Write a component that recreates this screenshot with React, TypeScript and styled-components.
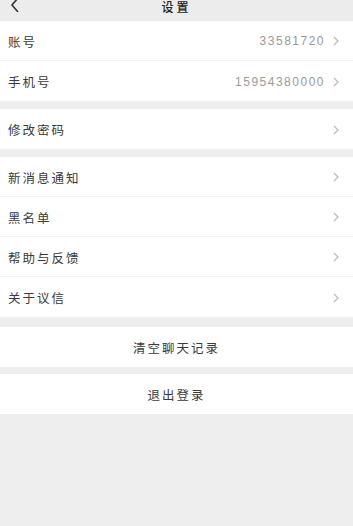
import React from "react";
import styled, { createGlobalStyle } from "styled-components";

const Global = createGlobalStyle`
  html, body {
    margin: 0;
    padding: 0;
    background: #eeeeee;
    font-family: "Noto Sans CJK SC", "Noto Sans", sans-serif;
  }
  * { box-sizing: border-box; }
`;

const Page = styled.div`
  width: 353px;
  min-height: 526px;
  background: #eeeeee;
  display: flex;
  flex-direction: column;
`;

const Header = styled.div`
  height: 21px;
  display: flex;
  align-items: flex-start;
  justify-content: center;
  position: relative;
  background: #ececec;
`;

const Back = styled.div`
  position: absolute;
  left: 10px;
  top: 0;
  width: 10px;
  height: 12px;
  display: flex;
`;

const Title = styled.div`
  font-size: 12px;
  line-height: 13px;
  padding-top: 0;
  color: #222;
  letter-spacing: 3px;
  font-weight: 500;
`;

const Group = styled.div<{ $gap: number }>`
  display: flex;
  flex-direction: column;
  background: #fff;
  margin-top: ${(p) => p.$gap}px;
`;

const Row = styled.div`
  height: 40px;
  display: flex;
  align-items: center;
  padding: 1px 14px 0 8px;
  border-bottom: 1px solid #f2f2f2;
  &:last-child { border-bottom: none; }
`;

const Label = styled.span`
  font-size: 12.5px;
  letter-spacing: 2px;
  color: #3a3a3a;
  flex: 1;
`;

const Value = styled.span`
  font-family: "Liberation Sans", Arial, sans-serif;
  font-size: 12px;
  letter-spacing: 1.5px;
  color: #9a9a9a;
  margin-right: 8px;
`;

const Center = styled.div`
  height: 40px;
  display: flex;
  align-items: center;
  justify-content: center;
  font-size: 12.5px;
  letter-spacing: 2px;
  color: #3a3a3a;
`;

const Chevron = () => (
  <svg width="6" height="10" viewBox="0 0 6 10">
    <path d="M1 1 L5 5 L1 9" fill="none" stroke="#b8b8b8" strokeWidth="1.2" />
  </svg>
);

const Item = ({ label, value }: { label: string; value?: string }) => (
  <Row>
    <Label>{label}</Label>
    {value && <Value>{value}</Value>}
    <Chevron />
  </Row>
);

export default function App() {
  return (
    <Page>
      <Global />
      <Header>
        <Back>
          <svg width="10" height="12" viewBox="0 0 10 12">
            <path d="M8 -2 L2 5 L8 12" fill="none" stroke="#333" strokeWidth="1.6" />
          </svg>
        </Back>
        <Title>设置</Title>
      </Header>
      <Group $gap={0}>
        <Item label="账号" value="33581720" />
        <Item label="手机号" value="15954380000" />
      </Group>
      <Group $gap={8}>
        <Item label="修改密码" />
      </Group>
      <Group $gap={8}>
        <Item label="新消息通知" />
        <Item label="黑名单" />
        <Item label="帮助与反馈" />
        <Item label="关于议信" />
      </Group>
      <Group $gap={10}>
        <Center>清空聊天记录</Center>
      </Group>
      <Group $gap={7}>
        <Center>退出登录</Center>
      </Group>
    </Page>
  );
}
